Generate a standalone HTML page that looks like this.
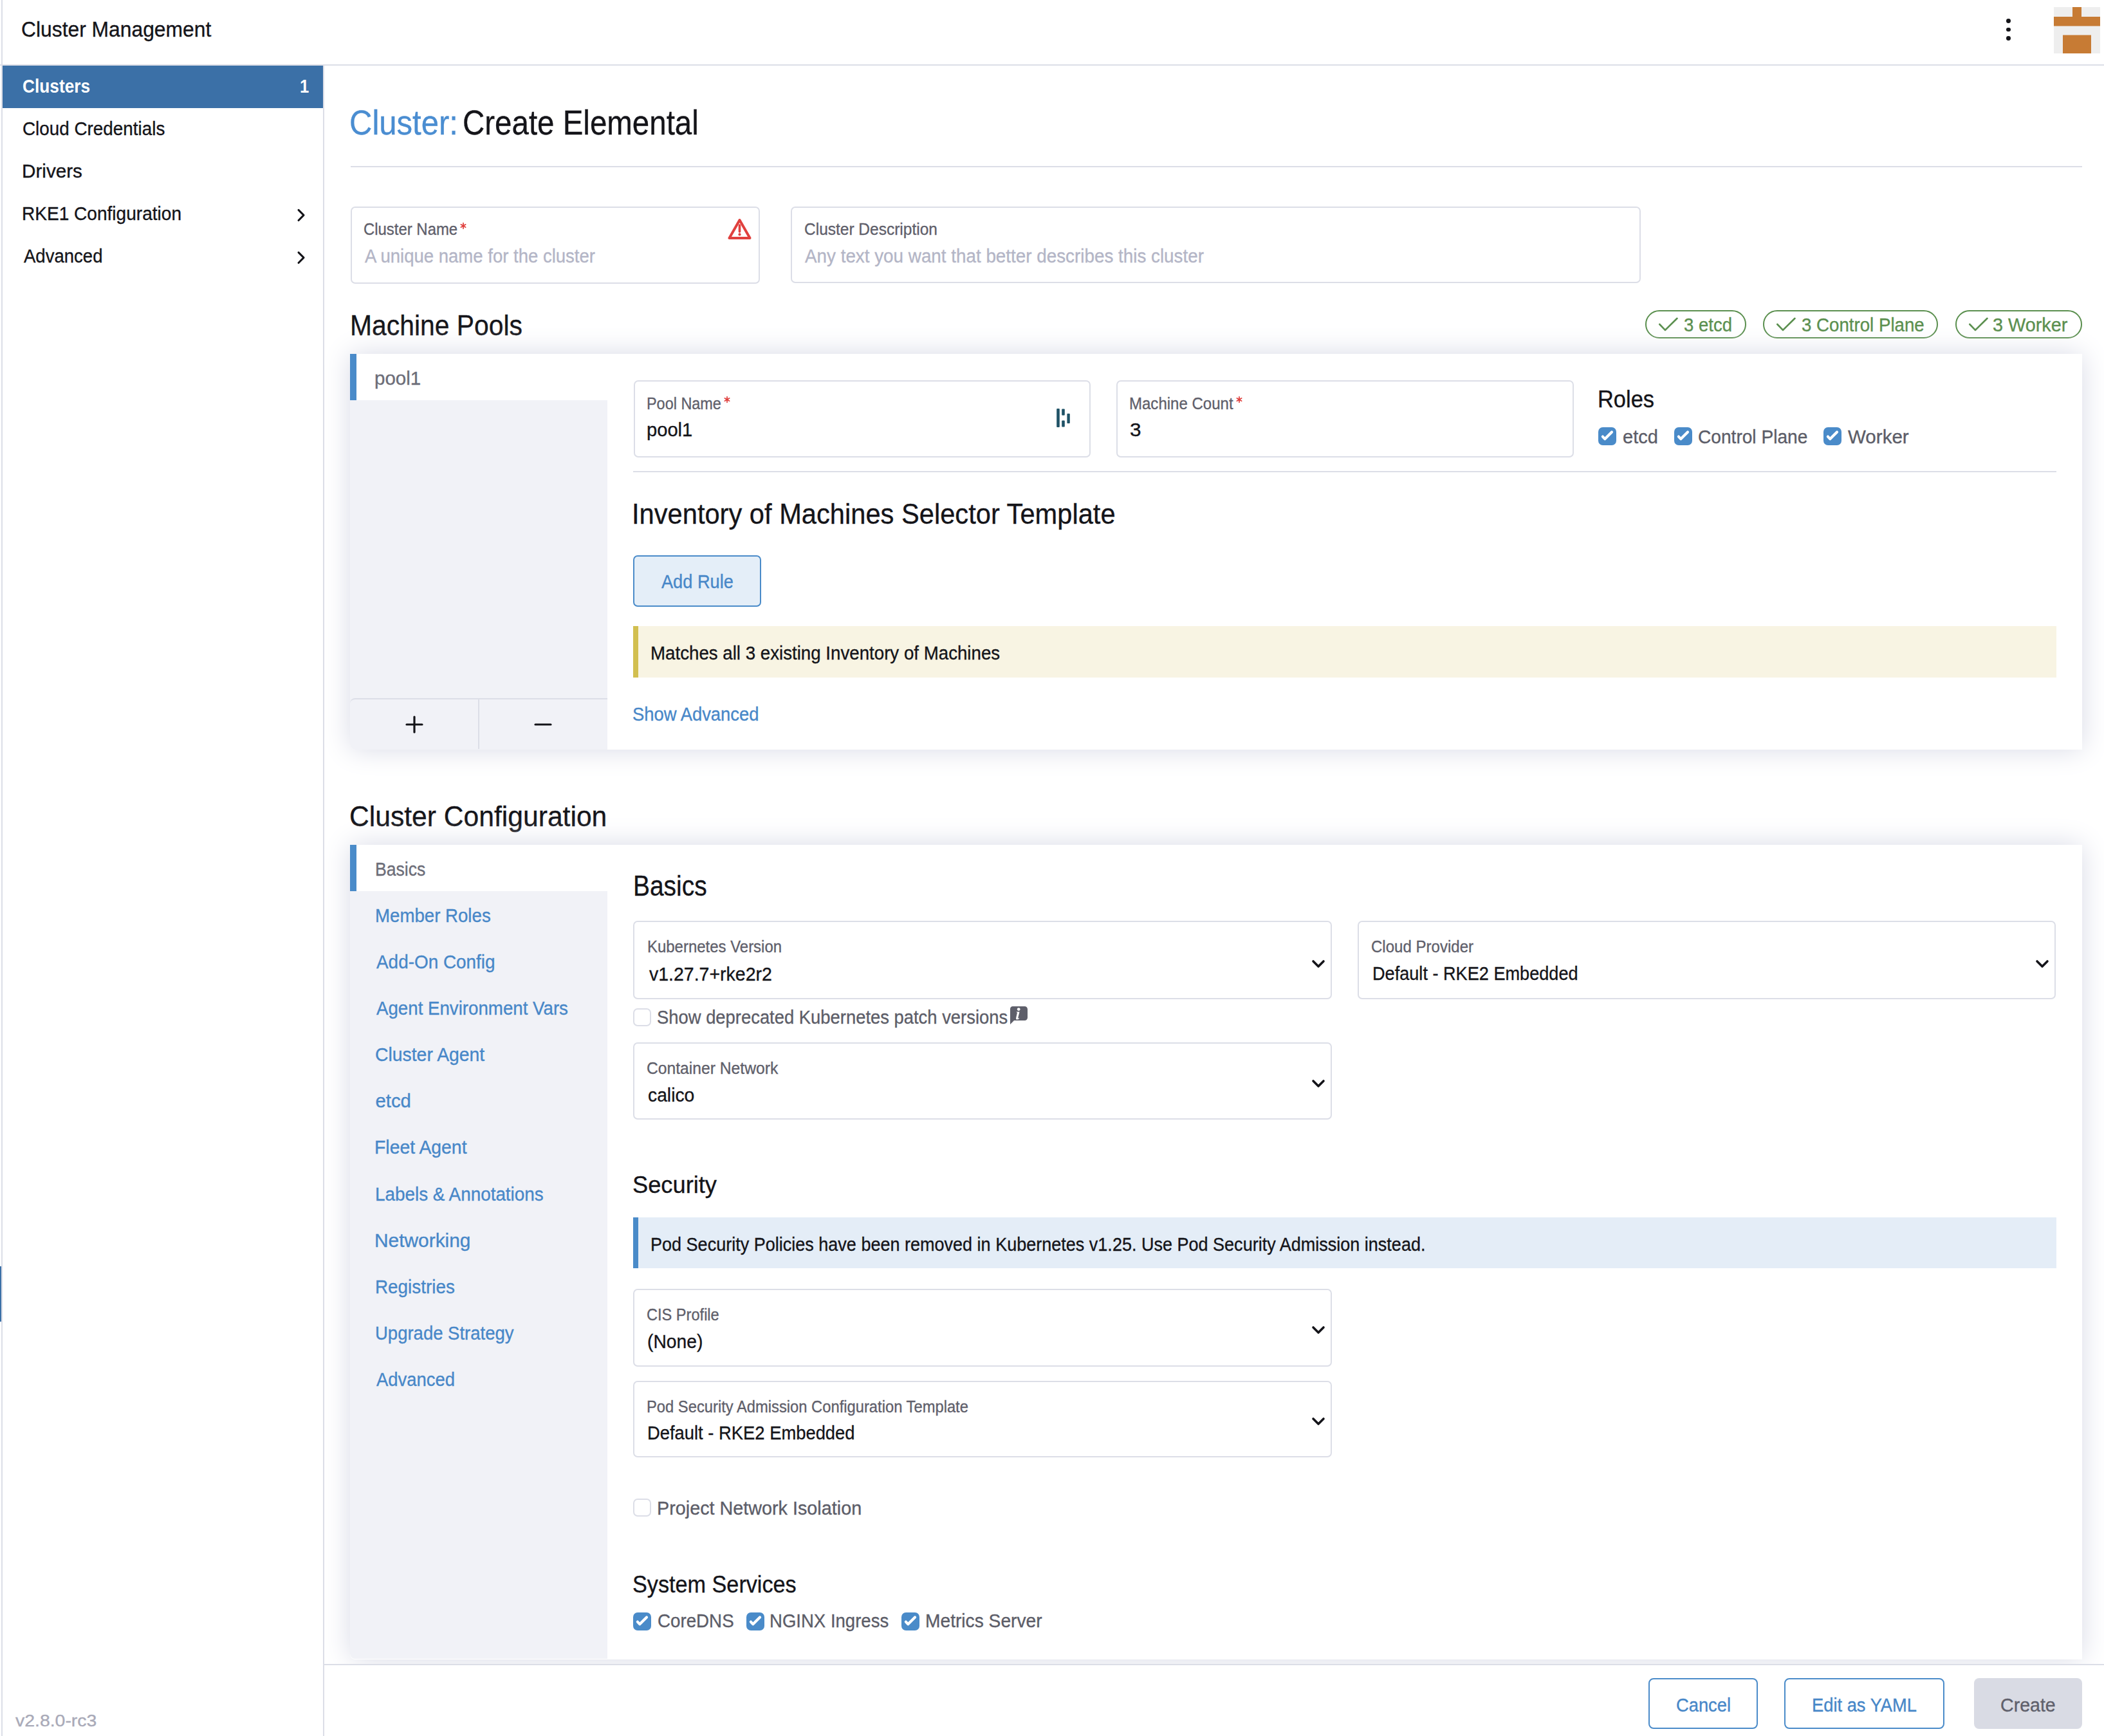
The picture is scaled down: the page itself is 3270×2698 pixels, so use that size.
<!DOCTYPE html>
<html><head><meta charset="utf-8"><title>Cluster: Create Elemental</title>
<style>
html,body{margin:0;padding:0;background:#fff;}
body{width:3270px;height:2698px;position:relative;overflow:hidden;font-family:"Liberation Sans",sans-serif;}
.t{position:absolute;white-space:nowrap;transform-origin:0 0;-webkit-text-stroke:0.35px currentColor;}
</style></head><body>
<div style="position:absolute;left:2px;top:0;width:2px;height:2698px;background:#dcdee7"></div>
<div style="position:absolute;left:0;top:1968px;width:2px;height:86px;background:#3b70a7"></div>
<div style="position:absolute;left:0;top:100px;width:3270px;height:2px;background:#dcdee7"></div>
<div class="t" style="left:33.2px;top:29.4px;font-size:33.4px;line-height:33.4px;color:#141419;transform:scaleX(0.9526);">Cluster Management</div>
<div style="position:absolute;left:3118.2px;top:29.300000000000004px;width:6.8px;height:6.8px;border-radius:50%;background:#141419"></div>
<div style="position:absolute;left:3118.2px;top:42.6px;width:6.8px;height:6.8px;border-radius:50%;background:#141419"></div>
<div style="position:absolute;left:3118.2px;top:55.9px;width:6.8px;height:6.8px;border-radius:50%;background:#141419"></div>
<svg style="position:absolute;left:3192px;top:10.6px" width="72" height="72" viewBox="0 0 72 72"><rect width="72" height="72" fill="#eeeeee"/><rect x="29" y="0" width="14" height="15" fill="#c77b34"/><rect x="0" y="15" width="72" height="14.5" fill="#c77b34"/><rect x="14" y="43.5" width="44" height="28.5" fill="#c77b34"/></svg>
<div style="position:absolute;left:502px;top:102px;width:2px;height:2596px;background:#dcdee7"></div>
<div style="position:absolute;left:4px;top:102px;width:498px;height:66px;background:#3b70a7"></div>
<div class="t" style="left:35.2px;top:118.8px;font-size:29.3px;line-height:29.3px;color:#ffffff;font-weight:700;-webkit-text-stroke:0;transform:scaleX(0.8968);">Clusters</div>
<div class="t" style="left:465.5px;top:118.8px;font-size:29.3px;line-height:29.3px;color:#ffffff;font-weight:700;-webkit-text-stroke:0;transform:scaleX(0.8714);">1</div>
<div class="t" style="left:35.1px;top:185.0px;font-size:29.3px;line-height:29.3px;color:#141419;transform:scaleX(0.9503);">Cloud Credentials</div>
<div class="t" style="left:34.1px;top:251.2px;font-size:29.3px;line-height:29.3px;color:#141419;transform:scaleX(1.0127);">Drivers</div>
<div class="t" style="left:34.3px;top:317.2px;font-size:29.3px;line-height:29.3px;color:#141419;transform:scaleX(0.9578);">RKE1 Configuration</div>
<div class="t" style="left:36.5px;top:383.2px;font-size:29.3px;line-height:29.3px;color:#141419;transform:scaleX(0.9397);">Advanced</div>
<svg style="position:absolute;left:458px;top:321.5px" width="20" height="24" viewBox="0 0 20 24"><path d="M6 4.4 L14 12.4 L6 20.5" fill="none" stroke="#141419" stroke-width="3" stroke-linecap="round" stroke-linejoin="round"/></svg>
<svg style="position:absolute;left:458px;top:387.5px" width="20" height="24" viewBox="0 0 20 24"><path d="M6 4.4 L14 12.4 L6 20.5" fill="none" stroke="#141419" stroke-width="3" stroke-linecap="round" stroke-linejoin="round"/></svg>
<div class="t" style="left:23.7px;top:2661.4px;font-size:26.0px;line-height:26.0px;color:#a9aab8;transform:scaleX(1.0927);">v2.8.0-rc3</div>
<div class="t" style="left:542.5px;top:163.7px;font-size:53.6px;line-height:53.6px;color:#4a8dd1;transform:scaleX(0.9145);">Cluster:</div>
<div class="t" style="left:719.3px;top:163.7px;font-size:53.6px;line-height:53.6px;color:#141419;transform:scaleX(0.8858);">Create Elemental</div>
<div style="position:absolute;left:545px;top:258px;width:2691px;height:2px;background:#dcdee7"></div>
<div style="position:absolute;left:544.5px;top:320.5px;width:636.5px;height:120.5px;box-sizing:border-box;border:2px solid #dcdee7;border-radius:7px;background:#fff;"></div>
<div class="t" style="left:565.3px;top:343.0px;font-size:26.0px;line-height:26.0px;color:#5f606b;transform:scaleX(0.9195);">Cluster Name</div>
<svg style="position:absolute;left:714.3px;top:344.7px" width="12" height="12" viewBox="-6 -6 12 12"><path d="M0 -4.3 V4.3 M-3.72 -2.15 L3.72 2.15 M-3.72 2.15 L3.72 -2.15" stroke="#e0403e" stroke-width="1.7" stroke-linecap="round"/></svg>
<div class="t" style="left:566.5px;top:382.7px;font-size:29.3px;line-height:29.3px;color:#b3b5c6;transform:scaleX(0.9393);">A unique name for the cluster</div>
<svg style="position:absolute;left:1131px;top:339px" width="37" height="33" viewBox="0 0 37 33"><path d="M18.5 3 L2.5 31 L34.5 31 Z" fill="none" stroke="#e0403e" stroke-width="4" stroke-linejoin="round"/><path d="M18.5 11 L18.5 21" stroke="#e0403e" stroke-width="3.6" stroke-linecap="round"/><circle cx="18.5" cy="25.4" r="2.1" fill="#e0403e"/></svg>
<div style="position:absolute;left:1229.3px;top:320.6px;width:1320.7px;height:119.79999999999995px;box-sizing:border-box;border:2px solid #dcdee7;border-radius:7px;background:#fff;"></div>
<div class="t" style="left:1250.0px;top:342.5px;font-size:26.0px;line-height:26.0px;color:#5f606b;transform:scaleX(0.9419);">Cluster Description</div>
<div class="t" style="left:1251.2px;top:383.0px;font-size:29.3px;line-height:29.3px;color:#b3b5c6;transform:scaleX(0.9494);">Any text you want that better describes this cluster</div>
<div class="t" style="left:543.5px;top:484.2px;font-size:44.6px;line-height:44.6px;color:#141419;transform:scaleX(0.9163);">Machine Pools</div>
<div style="position:absolute;left:2557px;top:482px;width:157px;height:44px;box-sizing:border-box;border:2px solid #5a8f4e;border-radius:22px"></div>
<svg style="position:absolute;left:2577px;top:492px" width="32" height="24" viewBox="0 0 32 24"><path d="M2.3 12 L11 21 L29.5 2.8" fill="none" stroke="#5a8f4e" stroke-width="2.6" stroke-linecap="round" stroke-linejoin="round"/></svg>
<div class="t" style="left:2617.0px;top:489.8px;font-size:29.3px;line-height:29.3px;color:#5a8f4e;transform:scaleX(0.9392);">3 etcd</div>
<div style="position:absolute;left:2740px;top:482px;width:271.5px;height:44px;box-sizing:border-box;border:2px solid #5a8f4e;border-radius:22px"></div>
<svg style="position:absolute;left:2760px;top:492px" width="32" height="24" viewBox="0 0 32 24"><path d="M2.3 12 L11 21 L29.5 2.8" fill="none" stroke="#5a8f4e" stroke-width="2.6" stroke-linecap="round" stroke-linejoin="round"/></svg>
<div class="t" style="left:2799.6px;top:489.8px;font-size:29.3px;line-height:29.3px;color:#5a8f4e;transform:scaleX(0.9444);">3 Control Plane</div>
<div style="position:absolute;left:3038.5px;top:482px;width:197.0px;height:44px;box-sizing:border-box;border:2px solid #5a8f4e;border-radius:22px"></div>
<svg style="position:absolute;left:3058.5px;top:492px" width="32" height="24" viewBox="0 0 32 24"><path d="M2.3 12 L11 21 L29.5 2.8" fill="none" stroke="#5a8f4e" stroke-width="2.6" stroke-linecap="round" stroke-linejoin="round"/></svg>
<div class="t" style="left:3096.8px;top:489.8px;font-size:29.3px;line-height:29.3px;color:#5a8f4e;transform:scaleX(0.9836);">3 Worker</div>
<div style="position:absolute;left:544px;top:550px;width:2692px;height:615px;background:#fff;box-shadow:0 0 44px #d8dae6;border-radius:0 0 0 8px"></div>
<div style="position:absolute;left:544px;top:622px;width:400px;height:543px;background:#f1f2f7;border-radius:0 0 0 8px"></div>
<div style="position:absolute;left:544px;top:550px;width:10px;height:72px;background:#4a8bc9"></div>
<div class="t" style="left:582.1px;top:572.6px;font-size:29.3px;line-height:29.3px;color:#6c6d78;transform:scaleX(1.0071);">pool1</div>
<div style="position:absolute;left:544px;top:1085px;width:400px;height:80px;box-sizing:border-box;border-top:2px solid #dcdee7;border-radius:8px 0 0 8px"></div>
<div style="position:absolute;left:743px;top:1085px;width:2px;height:79px;background:#dcdee7"></div>
<svg style="position:absolute;left:630px;top:1112px" width="28" height="28" viewBox="0 0 28 28"><path d="M14 2 L14 26 M2 14 L26 14" stroke="#141419" stroke-width="3.2" stroke-linecap="round"/></svg>
<svg style="position:absolute;left:830px;top:1112px" width="28" height="28" viewBox="0 0 28 28"><path d="M2 14 L26 14" stroke="#141419" stroke-width="3.2" stroke-linecap="round"/></svg>
<div style="position:absolute;left:984.5px;top:590.6px;width:710.5px;height:120.10000000000002px;box-sizing:border-box;border:2px solid #dcdee7;border-radius:7px;background:#fff;"></div>
<div class="t" style="left:1004.8px;top:613.5px;font-size:26.0px;line-height:26.0px;color:#5f606b;transform:scaleX(0.9009);">Pool Name</div>
<svg style="position:absolute;left:1123.9px;top:615px" width="12" height="12" viewBox="-6 -6 12 12"><path d="M0 -4.3 V4.3 M-3.72 -2.15 L3.72 2.15 M-3.72 2.15 L3.72 -2.15" stroke="#e0403e" stroke-width="1.7" stroke-linecap="round"/></svg>
<div class="t" style="left:1004.8px;top:652.6px;font-size:29.3px;line-height:29.3px;color:#141419;transform:scaleX(0.9939);">pool1</div>
<svg style="position:absolute;left:1642px;top:634.5px" width="21" height="30" viewBox="0 0 21 30"><rect x="0.2" y="0" width="4.6" height="29" rx="1" fill="#1f5266"/><rect x="8.2" y="0.5" width="4.6" height="10" rx="1" fill="#1f5266"/><rect x="8.2" y="18.5" width="4.6" height="10" rx="1" fill="#1f5266"/><rect x="16.4" y="7.8" width="4.4" height="15.2" rx="1" fill="#1f5266"/></svg>
<div style="position:absolute;left:1734.7px;top:590.8px;width:710.8999999999999px;height:120.20000000000005px;box-sizing:border-box;border:2px solid #dcdee7;border-radius:7px;background:#fff;"></div>
<div class="t" style="left:1755.1px;top:614.0px;font-size:26.0px;line-height:26.0px;color:#5f606b;transform:scaleX(0.9239);">Machine Count</div>
<svg style="position:absolute;left:1920.1px;top:615.4px" width="12" height="12" viewBox="-6 -6 12 12"><path d="M0 -4.3 V4.3 M-3.72 -2.15 L3.72 2.15 M-3.72 2.15 L3.72 -2.15" stroke="#e0403e" stroke-width="1.7" stroke-linecap="round"/></svg>
<div class="t" style="left:1755.7px;top:652.8px;font-size:29.3px;line-height:29.3px;color:#141419;transform:scaleX(1.0778);">3</div>
<div class="t" style="left:2483.1px;top:602.3px;font-size:37.2px;line-height:37.2px;color:#141419;transform:scaleX(0.9254);">Roles</div>
<svg style="position:absolute;left:2484.3px;top:664px" width="28" height="28" viewBox="0 0 28 28"><rect x="0" y="0" width="28" height="28" rx="7" fill="#4a8bc9"/><path d="M6.9 14.6 L10.2 18.2 L21 7.4" fill="none" stroke="#fff" stroke-width="4.2" stroke-linecap="round" stroke-linejoin="round"/></svg>
<div class="t" style="left:2521.7px;top:664.4px;font-size:29.3px;line-height:29.3px;color:#5c5d68;transform:scaleX(0.9904);">etcd</div>
<svg style="position:absolute;left:2602px;top:664px" width="28" height="28" viewBox="0 0 28 28"><rect x="0" y="0" width="28" height="28" rx="7" fill="#4a8bc9"/><path d="M6.9 14.6 L10.2 18.2 L21 7.4" fill="none" stroke="#fff" stroke-width="4.2" stroke-linecap="round" stroke-linejoin="round"/></svg>
<div class="t" style="left:2638.6px;top:664.4px;font-size:29.3px;line-height:29.3px;color:#5c5d68;transform:scaleX(0.9595);">Control Plane</div>
<svg style="position:absolute;left:2833.9px;top:664px" width="28" height="28" viewBox="0 0 28 28"><rect x="0" y="0" width="28" height="28" rx="7" fill="#4a8bc9"/><path d="M6.9 14.6 L10.2 18.2 L21 7.4" fill="none" stroke="#fff" stroke-width="4.2" stroke-linecap="round" stroke-linejoin="round"/></svg>
<div class="t" style="left:2871.9px;top:664.4px;font-size:29.3px;line-height:29.3px;color:#5c5d68;transform:scaleX(1.0089);">Worker</div>
<div style="position:absolute;left:984px;top:732px;width:2212px;height:2px;background:#dcdee7"></div>
<div class="t" style="left:981.6px;top:777.0px;font-size:44.6px;line-height:44.6px;color:#141419;transform:scaleX(0.9339);">Inventory of Machines Selector Template</div>
<div style="position:absolute;left:984px;top:863px;width:198.5px;height:79.7px;box-sizing:border-box;border:2px solid #4a8bc9;border-radius:7px;background:#e4eef8"></div>
<div class="t" style="left:1028.0px;top:889.0px;font-size:29.3px;line-height:29.3px;color:#4787c8;transform:scaleX(0.9275);">Add Rule</div>
<div style="position:absolute;left:984px;top:973px;width:2212px;height:80px;background:#f8f4e3"></div>
<div style="position:absolute;left:984px;top:973px;width:8px;height:80px;background:#d2bf50"></div>
<div class="t" style="left:1010.5px;top:999.9px;font-size:29.3px;line-height:29.3px;color:#141419;transform:scaleX(0.9449);">Matches all 3 existing Inventory of Machines</div>
<div class="t" style="left:982.8px;top:1095.2px;font-size:29.3px;line-height:29.3px;color:#4787c8;transform:scaleX(0.9354);">Show Advanced</div>
<div class="t" style="left:543.2px;top:1247.2px;font-size:44.6px;line-height:44.6px;color:#141419;transform:scaleX(0.9556);">Cluster Configuration</div>
<div style="position:absolute;left:544px;top:1313px;width:2692px;height:1265.5px;background:#fff;box-shadow:0 0 44px #d8dae6;border-radius:0 0 0 8px"></div>
<div style="position:absolute;left:544px;top:1384.6px;width:400px;height:1193.9px;background:#f1f2f7;border-radius:0 0 0 8px"></div>
<div style="position:absolute;left:544px;top:1313px;width:10px;height:71.6px;background:#4a8bc9"></div>
<div class="t" style="left:582.6px;top:1336.0px;font-size:29.3px;line-height:29.3px;color:#6c6d78;transform:scaleX(0.9081);">Basics</div>
<div class="t" style="left:582.5px;top:1408.1px;font-size:29.3px;line-height:29.3px;color:#4787c8;transform:scaleX(0.9434);">Member Roles</div>
<div class="t" style="left:584.7px;top:1480.1px;font-size:29.3px;line-height:29.3px;color:#4787c8;transform:scaleX(0.9525);">Add-On Config</div>
<div class="t" style="left:584.7px;top:1552.2px;font-size:29.3px;line-height:29.3px;color:#4787c8;transform:scaleX(0.9447);">Agent Environment Vars</div>
<div class="t" style="left:583.3px;top:1624.3px;font-size:29.3px;line-height:29.3px;color:#4787c8;transform:scaleX(0.9679);">Cluster Agent</div>
<div class="t" style="left:583.5px;top:1696.3px;font-size:29.3px;line-height:29.3px;color:#4787c8;">etcd</div>
<div class="t" style="left:582.4px;top:1768.4px;font-size:29.3px;line-height:29.3px;color:#4787c8;transform:scaleX(0.9683);">Fleet Agent</div>
<div class="t" style="left:582.5px;top:1840.5px;font-size:29.3px;line-height:29.3px;color:#4787c8;transform:scaleX(0.9507);">Labels & Annotations</div>
<div class="t" style="left:582.3px;top:1912.6px;font-size:29.3px;line-height:29.3px;color:#4787c8;transform:scaleX(1.0200);">Networking</div>
<div class="t" style="left:582.5px;top:1984.6px;font-size:29.3px;line-height:29.3px;color:#4787c8;transform:scaleX(0.9506);">Registries</div>
<div class="t" style="left:582.6px;top:2056.7px;font-size:29.3px;line-height:29.3px;color:#4787c8;transform:scaleX(0.9384);">Upgrade Strategy</div>
<div class="t" style="left:584.7px;top:2128.8px;font-size:29.3px;line-height:29.3px;color:#4787c8;transform:scaleX(0.9366);">Advanced</div>
<div class="t" style="left:984.1px;top:1355.2px;font-size:44.6px;line-height:44.6px;color:#141419;transform:scaleX(0.8731);">Basics</div>
<div style="position:absolute;left:984.2px;top:1431.3px;width:1085.8px;height:121.70000000000005px;box-sizing:border-box;border:2px solid #dcdee7;border-radius:7px;background:#fff;"></div>
<div class="t" style="left:1005.9px;top:1458.2px;font-size:26.0px;line-height:26.0px;color:#5f606b;transform:scaleX(0.9212);">Kubernetes Version</div>
<div class="t" style="left:1008.5px;top:1499.1px;font-size:29.3px;line-height:29.3px;color:#141419;transform:scaleX(0.9723);">v1.27.7+rke2r2</div>
<svg style="position:absolute;left:2038px;top:1490.7px" width="24" height="16" viewBox="0 0 24 16"><path d="M3 3 L11 11 L19 3" fill="none" stroke="#141419" stroke-width="3.6" stroke-linecap="round" stroke-linejoin="round"/></svg>
<div style="position:absolute;left:2109.7px;top:1431.3px;width:1085.3000000000002px;height:121.70000000000005px;box-sizing:border-box;border:2px solid #dcdee7;border-radius:7px;background:#fff;"></div>
<div class="t" style="left:2130.8px;top:1458.3px;font-size:26.0px;line-height:26.0px;color:#5f606b;transform:scaleX(0.9250);">Cloud Provider</div>
<div class="t" style="left:2133.1px;top:1498.1px;font-size:29.3px;line-height:29.3px;color:#141419;transform:scaleX(0.9257);">Default - RKE2 Embedded</div>
<svg style="position:absolute;left:3162.5px;top:1490.7px" width="24" height="16" viewBox="0 0 24 16"><path d="M3 3 L11 11 L19 3" fill="none" stroke="#141419" stroke-width="3.6" stroke-linecap="round" stroke-linejoin="round"/></svg>
<div style="position:absolute;left:984.2px;top:1566.5px;width:28px;height:28px;box-sizing:border-box;border:2px solid #dcdee7;border-radius:7px;background:#fff"></div>
<div class="t" style="left:1020.6px;top:1566.2px;font-size:29.3px;line-height:29.3px;color:#5c5d68;transform:scaleX(0.9350);">Show deprecated Kubernetes patch versions</div>
<svg style="position:absolute;left:1569px;top:1564px" width="28" height="28" viewBox="0 0 28 28"><path d="M4.5 0 H23.5 A4.5 4.5 0 0 1 28 4.5 V17.5 A4.5 4.5 0 0 1 23.5 22 H7 L1 28 V4.5 A4.5 4.5 0 0 1 4.5 0 Z" fill="#5e5f6a"/><circle cx="14.2" cy="4.6" r="2.4" fill="#fff"/><path d="M10.5 8.6 H15.5 L13.3 17.6 Q13 19 14.6 18.6 L15.6 18.2 Q14.5 20.6 11.8 20.6 Q9.6 20.6 10.1 18.2 L11.9 10 Z" fill="#fff"/></svg>
<div style="position:absolute;left:984px;top:1619.6px;width:1086px;height:120.40000000000009px;box-sizing:border-box;border:2px solid #dcdee7;border-radius:7px;background:#fff;"></div>
<div class="t" style="left:1005.3px;top:1646.7px;font-size:26.0px;line-height:26.0px;color:#5f606b;transform:scaleX(0.9487);">Container Network</div>
<div class="t" style="left:1006.7px;top:1687.2px;font-size:29.3px;line-height:29.3px;color:#141419;transform:scaleX(0.9653);">calico</div>
<svg style="position:absolute;left:2038px;top:1676.8px" width="24" height="16" viewBox="0 0 24 16"><path d="M3 3 L11 11 L19 3" fill="none" stroke="#141419" stroke-width="3.6" stroke-linecap="round" stroke-linejoin="round"/></svg>
<div class="t" style="left:983.3px;top:1823.2px;font-size:37.2px;line-height:37.2px;color:#141419;transform:scaleX(0.9750);">Security</div>
<div style="position:absolute;left:984px;top:1891.6px;width:2212px;height:79.6px;background:#e4edf7"></div>
<div style="position:absolute;left:984px;top:1891.6px;width:8px;height:79.6px;background:#4a8bc9"></div>
<div class="t" style="left:1010.7px;top:1919.0px;font-size:29.3px;line-height:29.3px;color:#141419;transform:scaleX(0.9222);">Pod Security Policies have been removed in Kubernetes v1.25. Use Pod Security Admission instead.</div>
<div style="position:absolute;left:984.4px;top:2002.8px;width:1085.7999999999997px;height:121.20000000000005px;box-sizing:border-box;border:2px solid #dcdee7;border-radius:7px;background:#fff;"></div>
<div class="t" style="left:1005.4px;top:2029.5px;font-size:26.0px;line-height:26.0px;color:#5f606b;transform:scaleX(0.9072);">CIS Profile</div>
<div class="t" style="left:1006.0px;top:2070.1px;font-size:29.3px;line-height:29.3px;color:#141419;transform:scaleX(0.9640);">(None)</div>
<svg style="position:absolute;left:2038px;top:2059.8px" width="24" height="16" viewBox="0 0 24 16"><path d="M3 3 L11 11 L19 3" fill="none" stroke="#141419" stroke-width="3.6" stroke-linecap="round" stroke-linejoin="round"/></svg>
<div style="position:absolute;left:984.4px;top:2145.8px;width:1085.7999999999997px;height:119.69999999999982px;box-sizing:border-box;border:2px solid #dcdee7;border-radius:7px;background:#fff;"></div>
<div class="t" style="left:1004.7px;top:2172.6px;font-size:26.0px;line-height:26.0px;color:#5f606b;transform:scaleX(0.9135);">Pod Security Admission Configuration Template</div>
<div class="t" style="left:1005.5px;top:2212.0px;font-size:29.3px;line-height:29.3px;color:#141419;transform:scaleX(0.9342);">Default - RKE2 Embedded</div>
<svg style="position:absolute;left:2038px;top:2202px" width="24" height="16" viewBox="0 0 24 16"><path d="M3 3 L11 11 L19 3" fill="none" stroke="#141419" stroke-width="3.6" stroke-linecap="round" stroke-linejoin="round"/></svg>
<div style="position:absolute;left:984px;top:2328.5px;width:28px;height:28px;box-sizing:border-box;border:2px solid #dcdee7;border-radius:7px;background:#fff"></div>
<div class="t" style="left:1020.6px;top:2329.1px;font-size:29.3px;line-height:29.3px;color:#5c5d68;transform:scaleX(0.9818);">Project Network Isolation</div>
<div class="t" style="left:982.5px;top:2443.7px;font-size:37.2px;line-height:37.2px;color:#141419;transform:scaleX(0.9198);">System Services</div>
<svg style="position:absolute;left:984px;top:2505.5px" width="28" height="28" viewBox="0 0 28 28"><rect x="0" y="0" width="28" height="28" rx="7" fill="#4a8bc9"/><path d="M6.9 14.6 L10.2 18.2 L21 7.4" fill="none" stroke="#fff" stroke-width="4.2" stroke-linecap="round" stroke-linejoin="round"/></svg>
<div class="t" style="left:1021.5px;top:2504.1px;font-size:29.3px;line-height:29.3px;color:#5c5d68;transform:scaleX(0.9463);">CoreDNS</div>
<svg style="position:absolute;left:1160px;top:2505.5px" width="28" height="28" viewBox="0 0 28 28"><rect x="0" y="0" width="28" height="28" rx="7" fill="#4a8bc9"/><path d="M6.9 14.6 L10.2 18.2 L21 7.4" fill="none" stroke="#fff" stroke-width="4.2" stroke-linecap="round" stroke-linejoin="round"/></svg>
<div class="t" style="left:1196.2px;top:2504.1px;font-size:29.3px;line-height:29.3px;color:#5c5d68;transform:scaleX(0.9402);">NGINX Ingress</div>
<svg style="position:absolute;left:1401px;top:2505.5px" width="28" height="28" viewBox="0 0 28 28"><rect x="0" y="0" width="28" height="28" rx="7" fill="#4a8bc9"/><path d="M6.9 14.6 L10.2 18.2 L21 7.4" fill="none" stroke="#fff" stroke-width="4.2" stroke-linecap="round" stroke-linejoin="round"/></svg>
<div class="t" style="left:1437.7px;top:2504.1px;font-size:29.3px;line-height:29.3px;color:#5c5d68;transform:scaleX(0.9615);">Metrics Server</div>
<div style="position:absolute;left:504px;top:2586px;width:2766px;height:112px;background:#fff;border-top:2px solid #dcdee7"></div>
<div style="position:absolute;left:2561.5px;top:2608.4px;width:170.80000000000018px;height:79px;box-sizing:border-box;border:2px solid #4a8bc9;border-radius:8px;background:#fff"></div>
<div class="t" style="left:2604.6px;top:2634.9px;font-size:29.3px;line-height:29.3px;color:#4787c8;transform:scaleX(0.9322);">Cancel</div>
<div style="position:absolute;left:2773.4px;top:2608.4px;width:248.19999999999982px;height:79px;box-sizing:border-box;border:2px solid #4a8bc9;border-radius:8px;background:#fff"></div>
<div class="t" style="left:2815.5px;top:2634.9px;font-size:29.3px;line-height:29.3px;color:#4787c8;transform:scaleX(0.9327);">Edit as YAML</div>
<div style="position:absolute;left:3068px;top:2608.4px;width:168px;height:79px;border-radius:8px;background:#d9dbe4"></div>
<div class="t" style="left:3108.6px;top:2634.9px;font-size:29.3px;line-height:29.3px;color:#5f606b;transform:scaleX(0.9751);">Create</div>
</body></html>
